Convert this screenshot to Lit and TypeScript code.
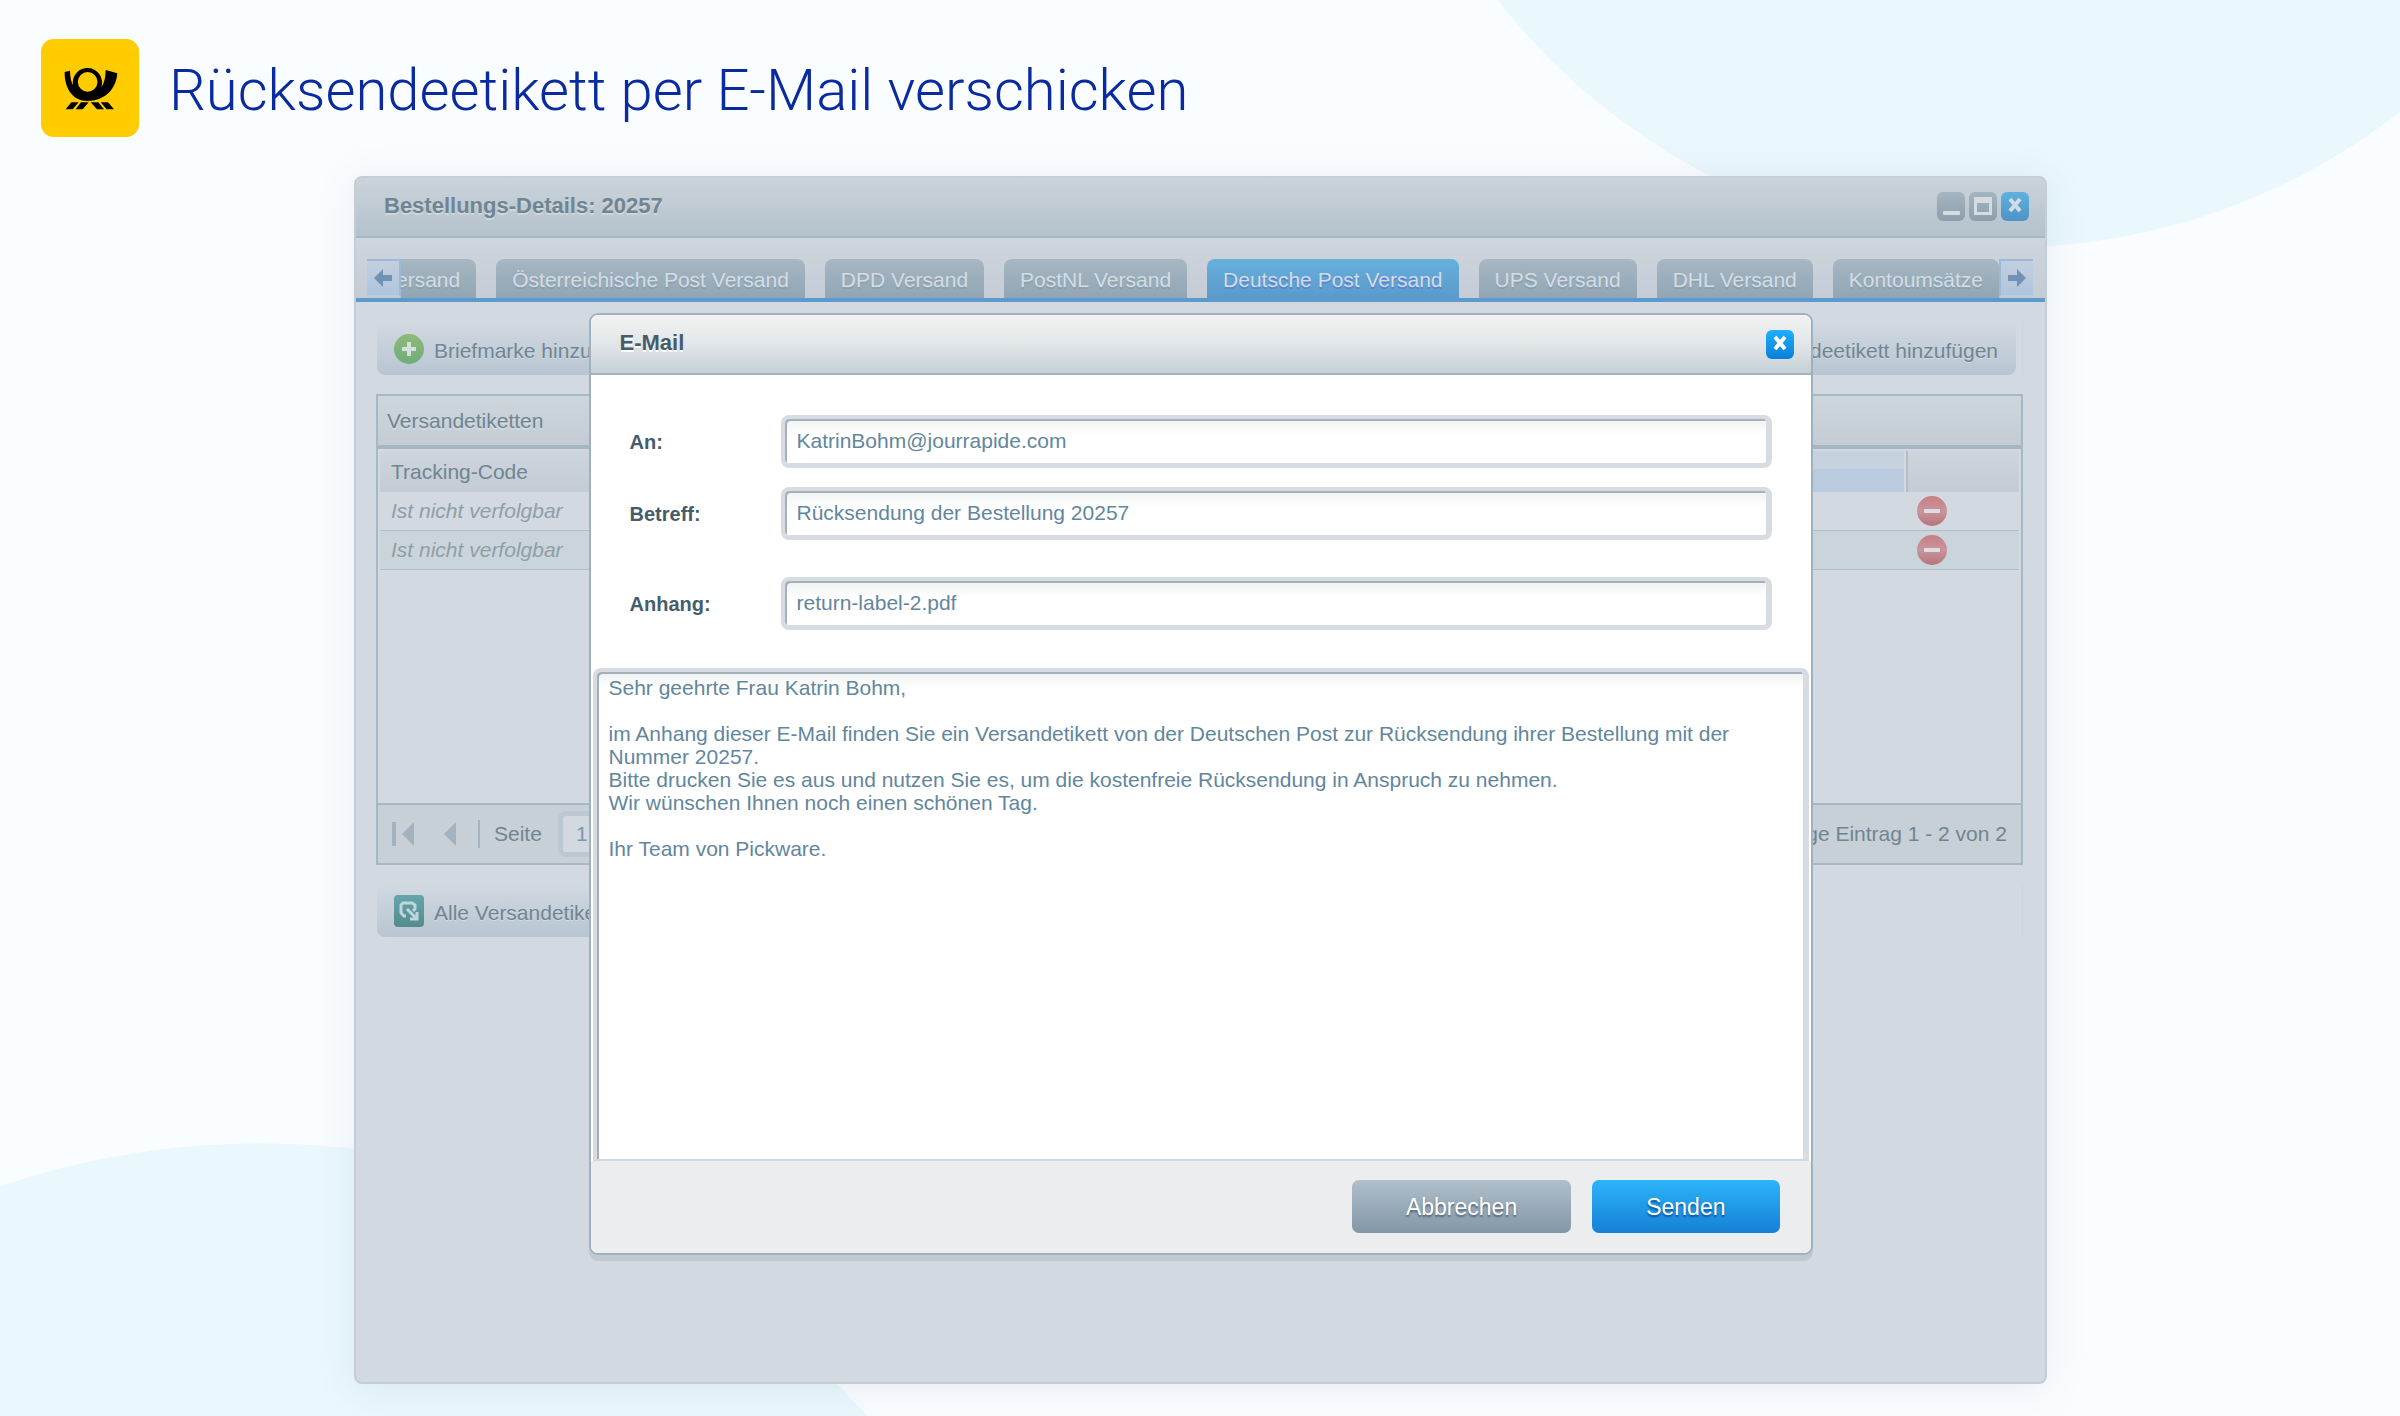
import { LitElement, html, css, svg } from "lit";
import { customElement, state } from "lit/decorators.js";
import { classMap } from "lit/directives/class-map.js";

const TABS = [
  "GLS Versand",
  "Österreichische Post Versand",
  "DPD Versand",
  "PostNL Versand",
  "Deutsche Post Versand",
  "UPS Versand",
  "DHL Versand",
  "Kontoumsätze",
];

const MESSAGE = `Sehr geehrte Frau Katrin Bohm,

im Anhang dieser E-Mail finden Sie ein Versandetikett von der Deutschen Post zur Rücksendung ihrer Bestellung mit der Nummer 20257.
Bitte drucken Sie es aus und nutzen Sie es, um die kostenfreie Rücksendung in Anspruch zu nehmen.
Wir wünschen Ihnen noch einen schönen Tag.

Ihr Team von Pickware.`;

const cross = svg`<path d="M9 7 L19 19 M19 7 L9 19" fill="none" stroke="currentColor" stroke-width="4"/>`;

@customElement("app-root")
export class AppRoot extends LitElement {
  @state() private activeTab = 4;

  static styles = css`
    :host {
      display: flex;
      flex-direction: column;
      box-sizing: border-box;
      min-height: 100vh;
      background:
        radial-gradient(circle at calc(100% - 395px) -396px, #eaf7fd 643px, transparent 644px),
        radial-gradient(circle at 260px calc(100% + 540px), #eaf7fd 812px, transparent 813px),
        #fafdff;
      font-family: "Liberation Sans", Arial, sans-serif;
      font-size: 21px;
      line-height: 24px;
      color: #708591;
    }
    * {
      box-sizing: border-box;
    }
    button,
    input,
    textarea {
      font: inherit;
      color: inherit;
      margin: 0;
      padding: 0;
      border: 0;
      background: none;
      outline: none;
    }
    button {
      cursor: pointer;
    }
    svg {
      display: block;
    }
    .page-header {
      display: flex;
      align-items: center;
      gap: 30px;
      padding: 39px 41px;
    }
    .logo {
      width: 98px;
      height: 98px;
      flex: none;
    }
    .page-header h1 {
      margin: 0;
      padding-top: 4px;
      font: 300 58px/72px Roboto, sans-serif;
      color: #0a2b9f;
    }
    main {
      flex: 1;
      display: flex;
      padding: 0 353px 32px 354px;
    }
    .window {
      position: relative;
      flex: 1;
      min-width: 0;
      display: flex;
      flex-direction: column;
      border: 2px solid #c2cdd6;
      border-radius: 8px;
      background: #d2d9e1;
      box-shadow: 0 4px 40px rgba(70, 90, 130, 0.1);
    }
    .title-bar {
      display: flex;
      align-items: center;
      height: 60px;
      padding: 0 16px 0 28px;
      border-bottom: 2px solid #a5b8c2;
      border-radius: 6px 6px 0 0;
      background: linear-gradient(#cbd3db, #b3c2cb);
    }
    .title-bar h2 {
      flex: 1;
      margin: 0;
      padding-bottom: 2px;
      font-size: 22px;
      line-height: 26px;
      text-shadow: 0 2px 0 rgba(255, 255, 255, 0.3);
    }
    .tools {
      display: flex;
      gap: 4px;
      padding-bottom: 2px;
    }
    .tool {
      width: 28px;
      height: 29px;
      border-radius: 6px;
      color: #d3dce3;
      background: linear-gradient(#a5b5c0, #8c9fad);
    }
    .tool.close {
      background: linear-gradient(#5fb1df, #4f93c6);
    }
    .tab-bar {
      display: flex;
      align-items: flex-end;
      height: 64px;
      padding: 0 12px 0 11px;
      border-bottom: 4px solid #5b9acb;
      background: linear-gradient(#ced5dc, #c4ccd6);
    }
    .scroll {
      flex: none;
      width: 34px;
      height: 38px;
      margin-bottom: 1px;
      color: #7292b5;
      border: 2px solid #9eb8d8;
      border-bottom-color: #b9cbe1;
      background: linear-gradient(#c3cfde, #afc5dd);
    }
    .scroll.left {
      border-left: 0;
    }
    .scroll.right {
      border-right: 0;
    }
    .scroll svg {
      margin: 0 auto;
    }
    .tabs {
      flex: 1;
      min-width: 0;
      display: flex;
      justify-content: flex-end;
      gap: 20px;
      overflow: hidden;
    }
    .tab {
      flex: none;
      height: 39px;
      padding: 2px 16px 0;
      border-radius: 8px 8px 0 0;
      white-space: nowrap;
      color: #d3dce3;
      text-shadow: 0 2px 0 rgba(110, 132, 150, 0.3);
      background: linear-gradient(#a7b7c3, #91a5b4);
    }
    .tab.active {
      background: linear-gradient(#66b0dc, #5b9acb);
      text-shadow: 0 2px 0 #5b82d4;
    }
    .content {
      padding: 20px 22px 0 20px;
    }
    .toolbar {
      display: flex;
      height: 53px;
      padding: 0 6px 0 1px;
      border-right: 1px solid #c9d6dd;
    }
    .toolbar button {
      display: flex;
      align-items: center;
      gap: 10px;
      padding: 0 18px 0 17px;
      white-space: nowrap;
      text-shadow: 0 1px 0 rgba(255, 255, 255, 0.3);
      background: linear-gradient(#d2d9e1, #b7c5d2);
    }
    .toolbar button:first-child {
      border-radius: 8px 0 0 8px;
    }
    .toolbar button.end {
      flex: 1;
      justify-content: flex-end;
      border-radius: 0 8px 8px 0;
    }
    .toolbar span {
      padding-top: 4px;
    }
    .panel {
      display: flex;
      flex-direction: column;
      margin: 19px 0;
      border: 2px solid #a5b8c4;
    }
    .panel h3 {
      margin: 0;
      padding: 13px 9px 12px;
      font-size: 21px;
      line-height: 24px;
      font-weight: 400;
      text-shadow: 0 2px 0 rgba(255, 255, 255, 0.25);
      border-bottom: 4px solid #a3b6c2;
      background: linear-gradient(#ced6dd, #c3cbd4);
    }
    .grid {
      height: 354px;
      padding: 2px;
    }
    table {
      width: 100%;
      table-layout: fixed;
      border-collapse: separate;
      border-spacing: 0;
    }
    th {
      height: 41px;
      padding: 0 11px;
      font-weight: 400;
      text-align: left;
      background: linear-gradient(#ced5dd, #c3cbd4);
    }
    th.sorted {
      border-right: 2px solid #d2d9e1;
      background: linear-gradient(#c6d2df 45%, #bbcbdf 45%);
    }
    th.actions {
      width: 113px;
      border-left: 2px solid #b2bfc9;
    }
    td {
      height: 39px;
      padding: 0 11px;
      color: #8f9ea7;
      border-bottom: 1px solid #b0bfcb;
    }
    td:first-child {
      font-style: italic;
    }
    tr:nth-child(even) td {
      background: #cad5db;
    }
    td button {
      display: block;
    }
    .pager {
      display: flex;
      align-items: center;
      height: 60px;
      padding: 0 14px;
      border-top: 2px solid #a5b8c4;
      background: #c6d0d6;
    }
    .pager label {
      padding-left: 14px;
    }
    .pager input {
      width: 72px;
      height: 46px;
      margin-left: 16px;
      padding-left: 13px;
      border: 5px solid #bcc8d1;
      border-radius: 8px;
      color: #7d97a9;
      background: #d2d9e1;
    }
    .pager output {
      flex: 1;
      text-align: right;
    }
    .first {
      margin-right: 30px;
    }
    .sep {
      width: 2px;
      height: 28px;
      margin-left: 22px;
      background: #a5b4be;
    }
    .overlay {
      position: absolute;
      inset: 0;
      display: flex;
      align-items: center;
      justify-content: center;
      padding-top: 8px;
    }
    .modal {
      width: 1224px;
      max-width: 100%;
      border: 2px solid #9fb1bf;
      border-radius: 9px;
      background: #fff;
      box-shadow: 0 6px 0 #c1c8d0;
      color: #475c6a;
    }
    .modal-header {
      display: flex;
      align-items: center;
      height: 60px;
      padding: 0 17px 0 29px;
      border-bottom: 2px solid #a3b4c1;
      border-radius: 7px 7px 0 0;
      background: linear-gradient(#f2f2f2, #e3e6e8 50%, #c5cfd8);
    }
    .modal-header h2 {
      flex: 1;
      margin: 0;
      padding-bottom: 2px;
      font-size: 22px;
      line-height: 26px;
      text-shadow: 0 2px 0 #fff;
    }
    .modal .tool {
      color: #fff;
      background: linear-gradient(#1cb0fb, #0a7fd8);
    }
    .fields {
      display: grid;
      grid-template-columns: 151px 1fr;
      align-items: center;
      row-gap: 19px;
      padding: 40px 39px 38px;
    }
    .fields label {
      font-size: 20px;
      font-weight: 700;
    }
    .fields .spaced {
      margin-top: 18px;
    }
    .fields input,
    textarea {
      border: solid #d7dce3;
      border-width: 4px 6px 5px 4px;
      border-radius: 8px;
      color: #62869d;
      background: linear-gradient(#eff1f1, #fff 16px);
      box-shadow: inset 2px 2px 0 #a5b0ba;
    }
    .fields input {
      width: 100%;
      height: 53px;
      padding-left: 12px;
    }
    textarea {
      display: block;
      width: calc(100% - 4px);
      height: 493px;
      margin: 0 2px;
      padding: 4px 20px 0 12px;
      border-bottom: 2px solid #cfd8df;
      border-bottom-left-radius: 0;
      border-bottom-right-radius: 0;
      line-height: 23px;
      resize: none;
    }
    .modal-footer {
      display: flex;
      justify-content: flex-end;
      gap: 21px;
      padding: 19px 31px 20px;
      border-radius: 0 0 7px 7px;
      background: #ebedef;
    }
    .action {
      height: 53px;
      padding: 0 54px;
      border-radius: 7px;
      font-size: 23px;
      color: #fff;
      text-shadow: 0 2px 2px rgba(50, 70, 90, 0.7);
      background: linear-gradient(#b0bfca, #8297a7);
    }
    .action.primary {
      text-shadow: 0 2px 2px rgba(10, 60, 130, 0.8);
      background: linear-gradient(#2db4f9, #1580d5);
    }
    @media (max-width: 1900px) {
      main {
        padding: 0 24px 32px;
      }
    }
  `;

  private renderLogo() {
    return html`<svg class="logo" viewBox="0 0 294 294" role="img" aria-label="Deutsche Post">
      <rect width="294" height="294" rx="38" fill="#fc0" />
      <path
        d="M71 99 L87 95 C87 112 90 127 96 139 A44 44 0 1 1 181 145 C190 132 194 114 194 93 L229 103 C225 153 190 186 139 186 C96 186 70 149 71 99 Z M140 99 A29.500 29.500 0 1 0 140 158 A29.500 29.500 0 1 0 140 99 Z"
        fill-rule="evenodd"
      />
      <path d="M91 190 H113 L95 211 H74 Z M120 190 H143 L125 211 H104 Z M149 190 H172 L189 211 H168 Z M179 190 H201 L219 211 H197 Z" />
    </svg>`;
  }

  private renderTab(label: string, index: number) {
    const active = index === this.activeTab;
    return html`<button
      class=${classMap({ tab: true, active })}
      role="tab"
      aria-selected=${active}
      @click=${() => (this.activeTab = index)}
    >${label}</button>`;
  }

  private renderRow() {
    return html`<tr>
      <td>Ist nicht verfolgbar</td>
      <td></td>
      <td>
        <button aria-label="Etikett löschen">
          <svg width="30" height="30" viewBox="0 0 30 30">
            <defs>
              <linearGradient id="red" x2="0" y2="1">
                <stop stop-color="#c67f85" />
                <stop offset=".5" stop-color="#c8959b" />
                <stop offset="1" stop-color="#b6737a" />
              </linearGradient>
            </defs>
            <circle cx="15" cy="15" r="15" fill="url(#red)" />
            <rect x="7" y="13" width="16" height="4" rx="1" fill="#dbdde2" />
          </svg>
        </button>
      </td>
    </tr>`;
  }

  private renderWindow() {
    return html`
      <header class="title-bar">
        <h2>Bestellungs-Details: 20257</h2>
        <div class="tools">
          <button class="tool" aria-label="Minimieren">
            <svg width="28" height="29"><rect x="6" y="19" width="17" height="4" rx="1" fill="currentColor" /></svg>
          </button>
          <button class="tool" aria-label="Maximieren">
            <svg width="28" height="29"><path d="M5 5 H23 V23 H5 Z M8 11 H20 V20 H8 Z" fill="currentColor" fill-rule="evenodd" /></svg>
          </button>
          <button class="tool close" aria-label="Fenster schließen">
            <svg width="28" height="29">${cross}</svg>
          </button>
        </div>
      </header>
      <nav class="tab-bar">
        <button class="scroll left" aria-label="Zurück blättern">
          <svg width="18" height="18"><path d="M0 9 L9 0 V6 H18 V12 H9 V18 Z" fill="currentColor" /></svg>
        </button>
        <div class="tabs" role="tablist">${TABS.map((label, i) => this.renderTab(label, i))}</div>
        <button class="scroll right" aria-label="Weiter blättern">
          <svg width="18" height="18"><path d="M18 9 L9 0 V6 H0 V12 H9 V18 Z" fill="currentColor" /></svg>
        </button>
      </nav>
      <div class="content">
        <div class="toolbar">
          <button>
            <svg width="30" height="30" viewBox="0 0 30 30">
              <defs>
                <linearGradient id="green" x2="0" y2="1">
                  <stop stop-color="#8fb878" />
                  <stop offset="1" stop-color="#6fad7c" />
                </linearGradient>
              </defs>
              <circle cx="15" cy="15" r="15" fill="url(#green)" />
              <path d="M15 8 V22 M8 15 H22" stroke="#d3e0dc" stroke-width="4" />
            </svg>
            <span>Briefmarke hinzufügen</span>
          </button>
          <button class="end"><span>Rücksendeetikett hinzufügen</span></button>
        </div>
        <section class="panel">
          <h3>Versandetiketten</h3>
          <div class="grid">
            <table>
              <thead>
                <tr>
                  <th>Tracking-Code</th>
                  <th class="sorted"></th>
                  <th class="actions"></th>
                </tr>
              </thead>
              <tbody>${this.renderRow()}${this.renderRow()}</tbody>
            </table>
          </div>
          <footer class="pager">
            <button class="first" aria-label="Erste Seite">
              <svg width="22" height="24"><path d="M0 0 H4 V24 H0 Z M22 0 V24 L10 12 Z" fill="#a2b2be" /></svg>
            </button>
            <button aria-label="Vorherige Seite">
              <svg width="12" height="24"><path d="M12 0 V24 L0 12 Z" fill="#a2b2be" /></svg>
            </button>
            <span class="sep"></span>
            <label for="page">Seite</label>
            <input id="page" .value=${"1"} />
            <output>Zeige Eintrag 1 - 2 von 2</output>
          </footer>
        </section>
        <div class="toolbar">
          <button>
            <svg width="30" height="32" viewBox="0 0 30 32">
              <defs>
                <linearGradient id="teal" x2="0" y2="1">
                  <stop stop-color="#65a5ad" />
                  <stop offset="1" stop-color="#558b8c" />
                </linearGradient>
              </defs>
              <rect width="30" height="32" rx="4" fill="url(#teal)" />
              <path
                d="M12 21 H10 L7 18 V10 L9 8 H18 L21 10 V14 L19 16 M13 14 L22 23 M23 17 V24 H16"
                fill="none"
                stroke="#bfd6da"
                stroke-width="3"
              />
            </svg>
            <span>Alle Versandetiketten drucken</span>
          </button>
        </div>
      </div>
    `;
  }

  private renderModal() {
    return html`<section class="modal" role="dialog" aria-labelledby="modal-title">
      <header class="modal-header">
        <h2 id="modal-title">E-Mail</h2>
        <button class="tool" aria-label="Schließen">
          <svg width="28" height="29">${cross}</svg>
        </button>
      </header>
      <div class="fields">
        <label for="to">An:</label>
        <input id="to" type="email" .value=${"KatrinBohm@jourrapide.com"} />
        <label for="subject">Betreff:</label>
        <input id="subject" .value=${"Rücksendung der Bestellung 20257"} />
        <label class="spaced" for="attachment">Anhang:</label>
        <input class="spaced" id="attachment" .value=${"return-label-2.pdf"} />
      </div>
      <textarea aria-label="Nachricht" spellcheck="false" .value=${MESSAGE}></textarea>
      <footer class="modal-footer">
        <button class="action">Abbrechen</button>
        <button class="action primary">Senden</button>
      </footer>
    </section>`;
  }

  render() {
    return html`
      <header class="page-header">
        ${this.renderLogo()}
        <h1>Rücksendeetikett per E-Mail verschicken</h1>
      </header>
      <main>
        <div class="window">
          ${this.renderWindow()}
          <div class="overlay">${this.renderModal()}</div>
        </div>
      </main>
    `;
  }
}
